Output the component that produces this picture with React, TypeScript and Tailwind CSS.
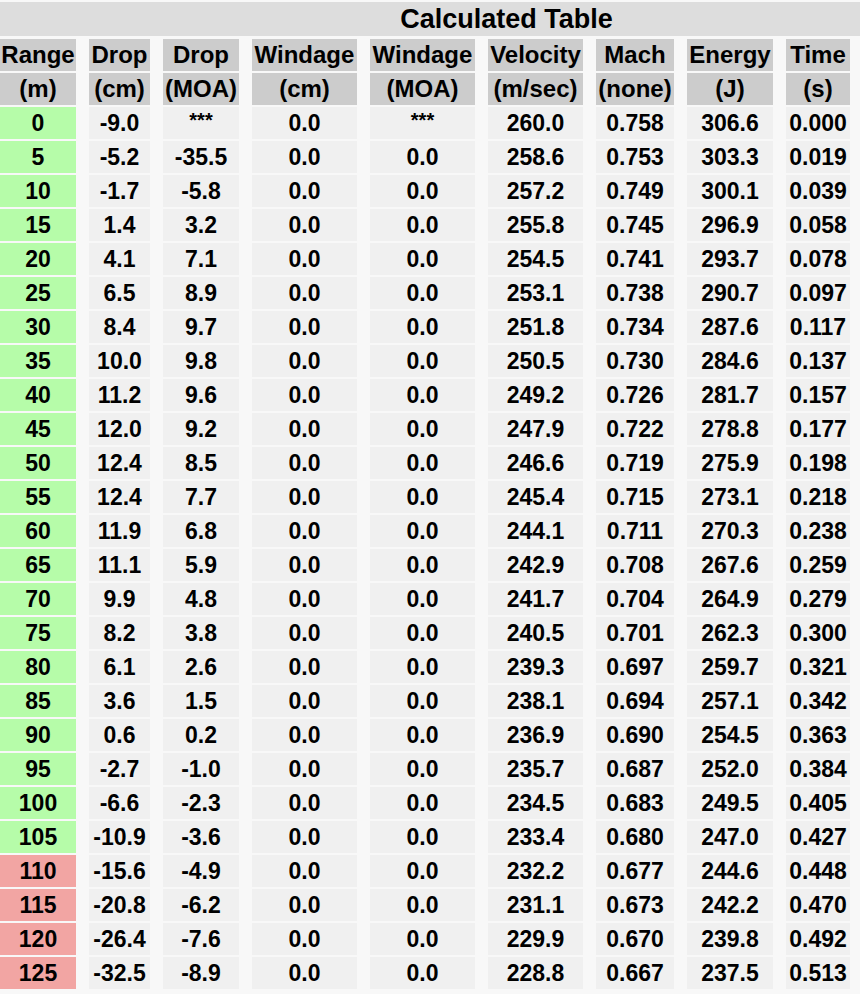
import React from 'react'

const cols = 'grid grid-cols-[76px_61px_76px_105px_105px_95px_78px_86px_64px] gap-x-[13px]'

const head1 = ['Range', 'Drop', 'Drop', 'Windage', 'Windage', 'Velocity', 'Mach', 'Energy', 'Time']
const head2 = ['(m)', '(cm)', '(MOA)', '(cm)', '(MOA)', '(m/sec)', '(none)', '(J)', '(s)']

// range, drop cm, drop moa, velocity, mach, energy, time
const rows: [number, string, string, string, string, string, string][] = [
  [0, '-9.0', '***', '260.0', '0.758', '306.6', '0.000'],
  [5, '-5.2', '-35.5', '258.6', '0.753', '303.3', '0.019'],
  [10, '-1.7', '-5.8', '257.2', '0.749', '300.1', '0.039'],
  [15, '1.4', '3.2', '255.8', '0.745', '296.9', '0.058'],
  [20, '4.1', '7.1', '254.5', '0.741', '293.7', '0.078'],
  [25, '6.5', '8.9', '253.1', '0.738', '290.7', '0.097'],
  [30, '8.4', '9.7', '251.8', '0.734', '287.6', '0.117'],
  [35, '10.0', '9.8', '250.5', '0.730', '284.6', '0.137'],
  [40, '11.2', '9.6', '249.2', '0.726', '281.7', '0.157'],
  [45, '12.0', '9.2', '247.9', '0.722', '278.8', '0.177'],
  [50, '12.4', '8.5', '246.6', '0.719', '275.9', '0.198'],
  [55, '12.4', '7.7', '245.4', '0.715', '273.1', '0.218'],
  [60, '11.9', '6.8', '244.1', '0.711', '270.3', '0.238'],
  [65, '11.1', '5.9', '242.9', '0.708', '267.6', '0.259'],
  [70, '9.9', '4.8', '241.7', '0.704', '264.9', '0.279'],
  [75, '8.2', '3.8', '240.5', '0.701', '262.3', '0.300'],
  [80, '6.1', '2.6', '239.3', '0.697', '259.7', '0.321'],
  [85, '3.6', '1.5', '238.1', '0.694', '257.1', '0.342'],
  [90, '0.6', '0.2', '236.9', '0.690', '254.5', '0.363'],
  [95, '-2.7', '-1.0', '235.7', '0.687', '252.0', '0.384'],
  [100, '-6.6', '-2.3', '234.5', '0.683', '249.5', '0.405'],
  [105, '-10.9', '-3.6', '233.4', '0.680', '247.0', '0.427'],
  [110, '-15.6', '-4.9', '232.2', '0.677', '244.6', '0.448'],
  [115, '-20.8', '-6.2', '231.1', '0.673', '242.2', '0.470'],
  [120, '-26.4', '-7.6', '229.9', '0.670', '239.8', '0.492'],
  [125, '-32.5', '-8.9', '228.8', '0.667', '237.5', '0.513'],
]

export default function App() {
  return (
    <div className="min-h-[994px] w-[860px] bg-[#f8f8f8] pt-[2px] font-['Liberation_Sans',Arial,sans-serif] font-bold text-black">
      <div className="bg-[#dddddd] mb-[3px]">
        <div className={cols}>
          <div className="col-start-3 col-span-7 h-[34px] flex items-center justify-center text-[27px] leading-none">
            Calculated Table
          </div>
        </div>
      </div>

      <div className={`${cols} gap-y-[2px] text-[23px] leading-none`}>
        {head1.map((h, i) => (
          <div key={'a' + i} className="h-[32px] bg-[#cccccc] flex items-center justify-center text-[24px]">{h}</div>
        ))}
        {head2.map((h, i) => (
          <div key={'b' + i} className="h-[32px] bg-[#cccccc] flex items-center justify-center text-[24px]">{h}</div>
        ))}
        {rows.map(r => {
          const cells = [r[1], r[2], '0.0', r[2] === '***' ? '***' : '0.0', r[3], r[4], r[5], r[6]]
          return (
            <React.Fragment key={r[0]}>
              <div className={`h-[32px] flex items-center justify-center ${r[0] > 105 ? 'bg-[#f2a5a3]' : 'bg-[#b6fca9]'}`}>
                {r[0]}
              </div>
              {cells.map((c, i) => (
                <div key={i} className={`h-[32px] bg-[#f0f0f0] flex items-center justify-center ${c === '***' ? 'text-[20px] pb-[6px]' : ''}`}>
                  {c}
                </div>
              ))}
            </React.Fragment>
          )
        })}
      </div>
    </div>
  )
}
